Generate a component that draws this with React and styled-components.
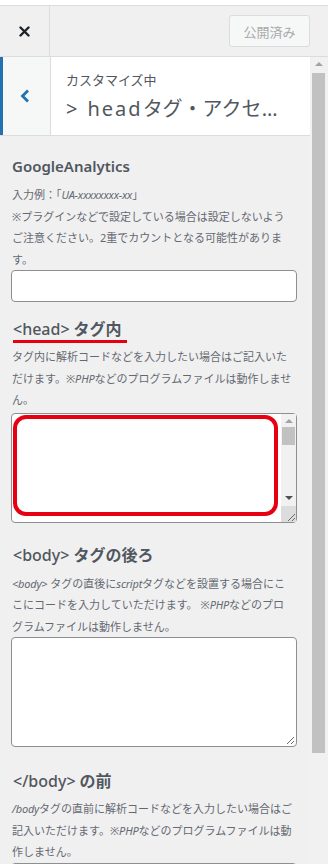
import styled, { createGlobalStyle } from 'styled-components';

const GlobalStyle = createGlobalStyle`
  html, body {
    margin: 0;
    padding: 0;
    background: #fff;
  }
  body {
    font-family: "Noto Sans", "Noto Sans CJK JP", sans-serif;
    color: #50575e;
  }
`;

const Frame = styled.div`
  width: 328px;
  height: 864px;
  padding-top: 5px;
  box-sizing: border-box;
  display: flex;
  flex-direction: column;
  overflow: hidden;
  background: #fff;
`;

const TopBar = styled.div`
  height: 52px;
  flex-shrink: 0;
  box-sizing: border-box;
  display: flex;
  align-items: center;
  background: #f0f0f1;
  border-top: 1px solid #dcdcde;
  border-bottom: 1px solid #dcdcde;
`;

const CloseButton = styled.div`
  width: 50px;
  height: 100%;
  box-sizing: border-box;
  display: flex;
  align-items: center;
  justify-content: center;
  border-right: 1px solid #dcdcde;
`;

const PublishButton = styled.div`
  margin-left: auto;
  margin-right: 18px;
  width: 81px;
  height: 32px;
  box-sizing: border-box;
  display: flex;
  align-items: center;
  justify-content: center;
  border: 1px solid #dcdcde;
  border-radius: 3px;
  background: #f6f7f7;
  color: #a7aaad;
  font-size: 13px;
`;

const Body = styled.div`
  flex: 1;
  display: flex;
  min-height: 0;
  background: #f0f0f1;
`;

const Main = styled.div`
  flex: 1;
  min-width: 0;
  display: flex;
  flex-direction: column;
`;

const PanelHeader = styled.div`
  height: 79px;
  flex-shrink: 0;
  display: flex;
  box-sizing: border-box;
  border-bottom: 1px solid #dcdcde;
`;

const BackButton = styled.div`
  width: 50px;
  box-sizing: border-box;
  border-left: 3px solid #2271b1;
  background: #f6f7f7;
  display: flex;
  align-items: center;
  justify-content: center;
  padding-right: 3px;
`;

const TitlePanel = styled.div`
  flex: 1;
  min-width: 0;
  background: #fff;
  border-left: 1px solid #dcdcde;
  padding: 0 22px 0 15px;
  display: flex;
  flex-direction: column;
  justify-content: center;
`;

const Eyebrow = styled.div`
  font-size: 13px;
  line-height: 20px;
  margin-top: 2px;
  color: #50575e;
`;

const PanelTitle = styled.div`
  font-size: 20px;
  line-height: 30px;
  margin-top: 4px;
  color: #50575e;
  white-space: nowrap;
  overflow: hidden;
  text-overflow: ellipsis;
`;

const Gt = styled.span`
  margin-right: 10px;
`;

const Latin = styled.span`
  letter-spacing: 2px;
`;

const Content = styled.div`
  padding: 0 13px 0 11px;
  display: flex;
  flex-direction: column;
  align-items: flex-start;
`;

const FieldTitle = styled.div`
  margin-top: 19px;
  margin-left: 1px;
  font-size: 15px;
  line-height: 22px;
  font-weight: 600;
  color: #50575e;
`;

const TagTitle = styled.div`
  margin-top: ${(p) => p.$mt}px;
  margin-left: 2px;
  padding-right: 5px;
  font-size: 16px;
  line-height: 21px;
  color: #50575e;
  border-bottom: 3px solid ${(p) => (p.$marked ? '#e60012' : 'transparent')};
`;

const TagCode = styled.span`
  font-weight: 500;
  margin-right: 4px;
`;

const TagWord = styled.span`
  font-weight: 700;
`;

const Description = styled.p`
  margin: ${(p) => p.$mt}px 0 0 1px;
  font-size: 11px;
  line-height: 21.5px;
  color: #646970;
`;

const Em = styled.i`
  font-style: italic;
  letter-spacing: -0.2px;
`;

const TextInput = styled.div`
  align-self: stretch;
  height: 32px;
  box-sizing: border-box;
  background: #fff;
  border: 1px solid #8c8f94;
  border-radius: 4px;
`;

const TextArea = styled.div`
  position: relative;
  align-self: stretch;
  margin-top: ${(p) => p.$mt}px;
  height: 110px;
  box-sizing: border-box;
  background: #fff;
  border: 1px solid #8c8f94;
  border-radius: 4px;
  display: flex;
  justify-content: flex-end;
`;

const InnerScroll = styled.div`
  width: 15px;
  display: flex;
  flex-direction: column;
  align-items: center;
  background: #f1f1f1;
`;

const Arrow = styled.div`
  width: 0;
  height: 0;
  border-left: 4px solid transparent;
  border-right: 4px solid transparent;
  ${(p) => (p.$down ? 'border-top: 4px solid #505050;' : 'border-bottom: 4px solid #a3a3a3;')}
  margin-top: ${(p) => p.$mt}px;
`;

const InnerThumb = styled.div`
  margin-top: 4px;
  width: 13px;
  height: 18px;
  background: #c1c1c1;
`;

const Spacer = styled.div`
  flex: 1;
`;

const ResizeCorner = styled.div`
  width: 15px;
  height: 16px;
  margin-top: 6px;
  background: #dcdcdc;
  display: flex;
  align-items: flex-end;
  justify-content: flex-end;
`;

const PlainCorner = styled.div`
  align-self: flex-end;
  display: flex;
  padding: 0 1px 1px 0;
`;

const RedMark = styled.div`
  position: absolute;
  left: 1px;
  top: 1px;
  width: 265px;
  height: 101px;
  box-sizing: border-box;
  border: 4px solid #e60012;
  border-radius: 13px;
  pointer-events: none;
`;

const PageScroll = styled.div`
  width: 18px;
  flex-shrink: 0;
  background: #f1f1f1;
  display: flex;
  flex-direction: column;
  align-items: flex-start;
  padding-left: 2px;
  box-sizing: border-box;
`;

const PageArrow = styled.div`
  margin: 5px 0 0 3px;
  width: 0;
  height: 0;
  border-left: 4px solid transparent;
  border-right: 4px solid transparent;
  border-bottom: 4px solid #a3a3a3;
`;

const PageThumb = styled.div`
  margin-top: 7px;
  width: 13px;
  height: 680px;
  background: #c1c1c1;
`;

function CloseIcon() {
  return (
    <svg width="11" height="11" viewBox="0 0 11 11">
      <path d="M1.5 1.5 L9.5 9.5 M9.5 1.5 L1.5 9.5" stroke="#1d2327" strokeWidth="2.4" strokeLinecap="round" />
    </svg>
  );
}

function ChevronLeft() {
  return (
    <svg width="10" height="14" viewBox="0 0 10 14">
      <path d="M8 1.5 L2.5 7 L8 12.5" fill="none" stroke="#2271b1" strokeWidth="2.8" />
    </svg>
  );
}

function ResizeGrip() {
  return (
    <svg width="12" height="12" viewBox="0 0 12 12">
      <path d="M11 4 L4 11 M11 8 L8 11" stroke="#6a6a6a" strokeWidth="1" />
    </svg>
  );
}

function CodeArea({ mt, marked }) {
  return (
    <TextArea $mt={mt}>
      {marked ? (
        <>
          <InnerScroll>
            <Arrow $mt={5} />
            <InnerThumb />
            <Spacer />
            <Arrow $down $mt={0} />
            <ResizeCorner>
              <ResizeGrip />
            </ResizeCorner>
          </InnerScroll>
          <RedMark />
        </>
      ) : (
        <PlainCorner>
          <ResizeGrip />
        </PlainCorner>
      )}
    </TextArea>
  );
}

export default function App() {
  return (
    <>
      <GlobalStyle />
      <Frame>
        <TopBar>
          <CloseButton>
            <CloseIcon />
          </CloseButton>
          <PublishButton>公開済み</PublishButton>
        </TopBar>
        <Body>
          <Main>
            <PanelHeader>
              <BackButton>
                <ChevronLeft />
              </BackButton>
              <TitlePanel>
                <Eyebrow>カスタマイズ中</Eyebrow>
                <PanelTitle>
                  <Gt>&gt;</Gt>
                  <Latin>head</Latin>タグ・アクセス解析
                </PanelTitle>
              </TitlePanel>
            </PanelHeader>
            <Content>
              <FieldTitle>GoogleAnalytics</FieldTitle>
              <Description $mt={7}>
                入力例：「<Em>UA-xxxxxxxx-xx</Em>」<br />
                ※プラグインなどで設定している場合は設定しないよう<br />
                ご注意ください。2重でカウントとなる可能性がありま<br />
                す。
              </Description>
              <TextInput />

              <TagTitle $mt={17} $marked>
                <TagCode>&lt;head&gt;</TagCode>
                <TagWord>タグ内</TagWord>
              </TagTitle>
              <Description $mt={3}>
                タグ内に解析コードなどを入力したい場合はご記入いた<br />
                だけます。※<Em>PHP</Em>などのプログラムファイルは動作しませ<br />
                ん。
              </Description>
              <CodeArea mt={2} marked />

              <TagTitle $mt={22}>
                <TagCode>&lt;body&gt;</TagCode>
                <TagWord>タグの後ろ</TagWord>
              </TagTitle>
              <Description $mt={4}>
                <Em>&lt;body&gt;</Em> タグの直後に<Em>script</Em>タグなどを設置する場合にこ<br />
                こにコードを入力していただけます。 ※<Em>PHP</Em>などのプロ<br />
                グラムファイルは動作しません。
              </Description>
              <CodeArea mt={0} />

              <TagTitle $mt={24}>
                <TagCode>&lt;/body&gt;</TagCode>
                <TagWord>の前</TagWord>
              </TagTitle>
              <Description $mt={3}>
                <Em>/body</Em>タグの直前に解析コードなどを入力したい場合はご<br />
                記入いただけます。※<Em>PHP</Em>などのプログラムファイルは動<br />
                作しません。
              </Description>
              <TextInput />
            </Content>
          </Main>
          <PageScroll>
            <PageArrow />
            <PageThumb />
          </PageScroll>
        </Body>
      </Frame>
    </>
  );
}
